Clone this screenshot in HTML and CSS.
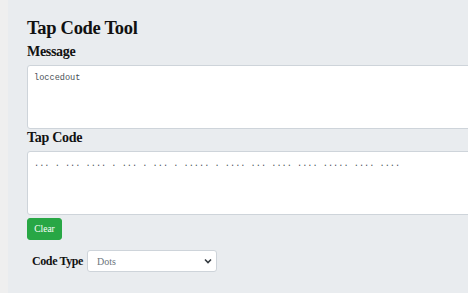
FILE: index.html
```html
<!DOCTYPE html>
<html>
  <head>
    <meta charset="UTF-8" />
    <title>Tap Code Tool</title>
    <link rel="stylesheet" href="styles.css">
  </head>
  <body>
    <main class="page">
      <h1 class="title">Tap Code Tool</h1>

      <label class="field-label" for="message">Message</label>
      <textarea id="message" class="box">loccedout</textarea>

      <label class="field-label field-label--tight" for="tapcode">Tap Code</label>
      <textarea id="tapcode" class="box">... . ... .... . ... . ... . ..... . .... ... .... .... ..... .... ....</textarea>

      <div class="actions">
        <button class="btn-clear" type="button">Clear</button>
      </div>

      <div class="type-row">
        <label class="type-label" for="codetype">Code Type</label>
        <div class="select-wrap">
          <select id="codetype" class="type-select">
            <option>Dots</option>
            <option>Numbers</option>
          </select>
          <svg class="select-arrow" width="8" height="6" viewBox="0 0 8 6">
            <path d="M1 1.5 L4 4.5 L7 1.5" fill="none" stroke="#343a40" stroke-width="1.6" />
          </svg>
        </div>
      </div>
    </main>
  </body>
</html>
```

FILE: styles.css
```css
html, body {
  margin: 0;
  height: 100%;
  overflow: hidden;
}

body {
  background-color: #efefef;
  font-family: 'Liberation Serif', serif;
  color: #111;
}

.page {
  margin-left: 8px;
  min-height: 100%;
  box-sizing: border-box;
  background-color: #e9ecef;
  padding: 17px 0 0 19px;
  display: flex;
  flex-direction: column;
  align-items: flex-start;
}

.title {
  margin: 0;
  font-size: 18.5px;
  line-height: 22px;
  letter-spacing: -0.3px;
  font-weight: bold;
}

.field-label {
  display: block;
  margin-top: 4px;
  font-size: 14px;
  line-height: 17px;
  font-weight: bold;
  letter-spacing: -0.3px;
}

.field-label--tight {
  margin-top: 0;
}

.box {
  display: block;
  margin-top: 5px;
  width: 470px;
  height: 64px;
  box-sizing: border-box;
  padding: 5px 6px;
  border: 1px solid #ced4da;
  border-radius: 3px;
  background-color: #fff;
  font-family: 'Liberation Mono', monospace;
  font-size: 8.6px;
  line-height: 14px;
  color: #495057;
  resize: none;
  outline: none;
}

.actions {
  margin-top: 3px;
}

.btn-clear {
  display: block;
  width: 35px;
  height: 22px;
  padding: 0;
  border: 1px solid #28a745;
  border-radius: 3px;
  background-color: #28a745;
  color: #fff;
  font-family: 'Liberation Serif', serif;
  font-size: 9.5px;
}

.type-row {
  margin-top: 10px;
  display: flex;
  align-items: center;
  gap: 4px;
  padding-left: 5px;
}

.type-label {
  font-size: 12px;
  font-weight: bold;
  letter-spacing: -0.4px;
}

.select-wrap {
  position: relative;
}

.type-select {
  display: block;
  width: 130px;
  height: 22px;
  box-sizing: border-box;
  padding: 0 9px;
  border: 1px solid #ced4da;
  border-radius: 3px;
  background-color: #fff;
  font-family: 'Liberation Serif', serif;
  font-size: 10px;
  color: #6c757d;
  appearance: none;
  -webkit-appearance: none;
  outline: none;
}

.select-arrow {
  position: absolute;
  right: 5px;
  top: 8px;
  pointer-events: none;
}
```
